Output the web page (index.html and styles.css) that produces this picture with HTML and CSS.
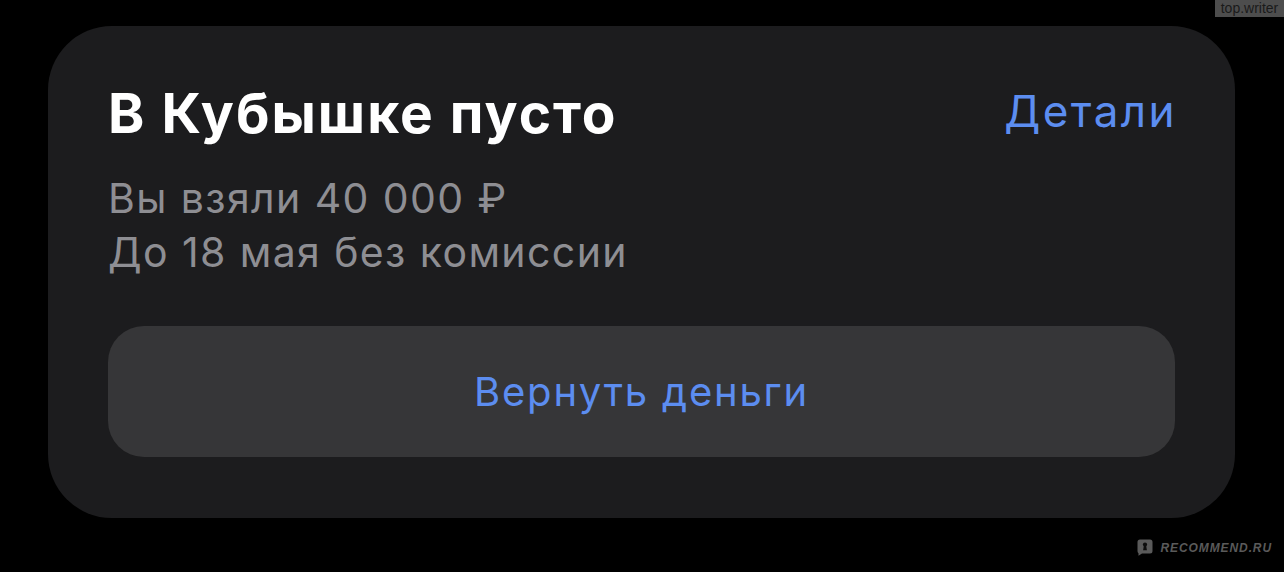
FILE: index.html
```html
<!DOCTYPE html>
<html lang="ru">
<head>
<meta charset="utf-8">
<link rel="stylesheet" href="styles.css">
</head>
<body>
<div class="page">
  <div class="card">
    <div class="head">
      <h1 class="title">В Кубышке пусто</h1>
      <a class="details">Детали</a>
    </div>
    <div class="sub">
      <div>Вы взяли 40 000 ₽</div>
      <div>До 18 мая без комиссии</div>
    </div>
    <button class="btn">Вернуть деньги</button>
  </div>
  <div class="wm-top">top.writer</div>
  <div class="wm-rec">
    <svg width="16" height="17" viewBox="0 0 16 17">
      <path d="M3 0.5h10a2.5 2.5 0 0 1 2.5 2.5v9a2.5 2.5 0 0 1-2.5 2.5H5l-3.5 2.3v-2.6A2.5 2.5 0 0 1 0.5 12V3a2.5 2.5 0 0 1 2.5-2.5z" fill="#5a5a5a"/>
      <circle cx="8" cy="5.6" r="2.1" fill="#0d0d0d"/>
      <path d="M6.9 6.6h2.2l0.8 4.6H6.1z" fill="#0d0d0d"/>
    </svg>
    <span>RECOMMEND.RU</span>
  </div>
</div>
</body>
</html>
```

FILE: styles.css
```css
html, body {
  margin: 0;
  padding: 0;
  background: #000;
}
.page {
  position: relative;
  width: 1284px;
  height: 572px;
  overflow: hidden;
  padding: 26px 0 0 48px;
  box-sizing: border-box;
  font-family: Inter, "Noto Sans", sans-serif;
}
.card {
  width: 1187px;
  height: 492px;
  box-sizing: border-box;
  background: #1c1c1e;
  border-radius: 64px;
  padding: 55px 60px 0 60px;
  display: flex;
  flex-direction: column;
}
.head {
  display: flex;
  justify-content: space-between;
  align-items: center;
}
.title {
  margin: 0;
  font-size: 55px;
  font-weight: 700;
  line-height: 64px;
  color: #ffffff;
  letter-spacing: 2px;
}
.details {
  font-size: 44px;
  line-height: 60px;
  margin-bottom: 4px;
  color: #5c8df0;
  font-weight: 400;
  letter-spacing: 2.4px;
  margin-right: -2px;
}
.sub {
  margin-top: 26px;
  font-size: 41px;
  line-height: 54px;
  color: #8e8e93;
  letter-spacing: 1.4px;
}
.btn {
  margin-top: 47px;
  height: 131px;
  width: 1067px;
  border: 0;
  border-radius: 36px;
  background: #363638;
  color: #5c8df0;
  font-family: inherit;
  font-size: 40px;
  letter-spacing: 1.8px;
  padding: 0;
}
.wm-top {
  position: absolute;
  top: 0;
  right: 0;
  width: 69px;
  height: 17px;
  background: #4d4d4d;
  color: #1a1a1a;
  font-family: "Liberation Sans", sans-serif;
  font-size: 14px;
  line-height: 17px;
  text-align: center;
}
.wm-rec {
  position: absolute;
  right: 12px;
  bottom: 16px;
  display: flex;
  align-items: center;
  gap: 8px;
  color: #5a5a5a;
  font-family: "Liberation Sans", sans-serif;
  font-weight: 700;
  font-style: italic;
  font-size: 12px;
  letter-spacing: 0.9px;
}
```
